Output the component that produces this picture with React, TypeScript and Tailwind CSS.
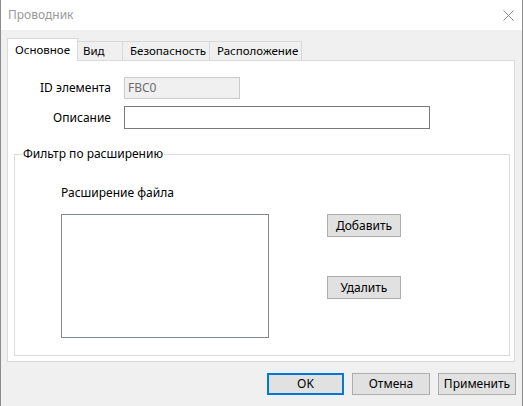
import React from "react";

const font = { fontFamily: '"Noto Sans", "Segoe UI", sans-serif' };

const tabs = [
  { label: "Основное", w: "w-[71px] pl-[7px]" },
  { label: "Вид", w: "w-[46px] pl-[5px]" },
  { label: "Безопасность", w: "w-[88px] pl-[7px]" },
  { label: "Расположение", w: "w-[93px] pl-[7px]" },
];

function Tab({ label, w, active }: { label: string; w: string; active?: boolean }) {
  if (active) {
    return (
      <div className={`relative z-10 -mb-px flex h-[23px] items-center border border-b-0 border-[#d9d9d9] bg-white text-[11.5px] text-black ${w}`}>
        {label}
      </div>
    );
  }
  return (
    <div className={`-ml-px flex h-[19px] items-center border border-b-0 border-[#d9d9d9] bg-[#f0f0f0] text-[11.5px] text-black ${w}`}>
      {label}
    </div>
  );
}

function Button({ label, primary, className = "" }: { label: string; primary?: boolean; className?: string }) {
  return (
    <button
      className={
        "flex items-center justify-center bg-[#e1e1e1] text-[12px] text-black " +
        (primary ? "border-2 border-[#0078d7] " : "border border-[#adadad] ") +
        className
      }
    >
      {label}
    </button>
  );
}

export default function App() {
  return (
    <div className="flex h-[406px] w-[523px] flex-col border-x border-[#8c8c8c] bg-[#f0f0f0]" style={font}>
      {/* title bar */}
      <div className="flex h-[30px] items-center justify-between bg-white pl-[7px] pr-[8px]">
        <span className="text-[12px] text-[#999999]">Проводник</span>
        <svg width="11" height="11" viewBox="0 0 11 11" className="text-[#8a8a8a]">
          <path d="M0.5 0.5 L10.5 10.5 M10.5 0.5 L0.5 10.5" stroke="currentColor" strokeWidth="1" />
        </svg>
      </div>

      {/* tabs */}
      <div className="mt-[8px] flex items-end pl-[6px]">
        {tabs.map((t, i) => (
          <Tab key={t.label} label={t.label} w={t.w} active={i === 0} />
        ))}
      </div>

      {/* tab page */}
      <div className="ml-[6px] flex h-[302px] w-[508px] flex-col border border-[#d9d9d9] bg-white">
        <div className="mt-[16px] grid grid-cols-[103px_1fr] items-center gap-x-[13px] gap-y-[7px]">
          <span className="text-right text-[12px] text-black">ID элемента</span>
          <div className="flex h-[22px] w-[116px] items-center border border-[#cccccc] bg-[#f0f0f0] px-[3px] text-[12px] text-[#6d6d6d]">
            FBC0
          </div>
          <span className="text-right text-[12px] text-black">Описание</span>
          <div className="h-[23px] w-[306px] border border-[#7a7a7a] bg-white" />
        </div>

        <fieldset className="ml-[6px] mt-[18px] h-[209px] w-[496px] border border-[#dcdcdc]">
          <legend className="ml-[7px] px-[1px] text-[12px] leading-[14px] text-black">Фильтр по расширению</legend>
          <div className="px-[46px]">
            <div className="mt-[23px] text-[12px] text-black">Расширение файла</div>
            <div className="mt-[12px] flex items-start">
              <div className="h-[124px] w-[208px] border border-[#828790] bg-white" />
              <div className="ml-[58px] flex flex-col gap-[39px]">
                <Button label="Добавить" className="h-[23px] w-[74px]" />
                <Button label="Удалить" className="h-[23px] w-[74px]" />
              </div>
            </div>
          </div>
        </fieldset>
      </div>

      {/* dialog buttons */}
      <div className="mt-[11px] flex justify-end gap-[8px] pr-[6px]">
        <Button label="OK" primary className="h-[22px] w-[77px]" />
        <Button label="Отмена" className="h-[22px] w-[78px]" />
        <Button label="Применить" className="h-[22px] w-[78px]" />
      </div>
    </div>
  );
}
